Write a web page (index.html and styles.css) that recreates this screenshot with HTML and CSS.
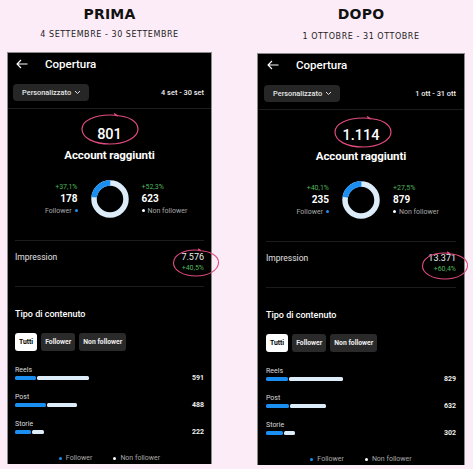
FILE: index.html
```html
<!DOCTYPE html>
<html lang="it">
<head>
<meta charset="utf-8">
<title>Prima / Dopo</title>
<link rel="stylesheet" href="styles.css">
</head>
<body>
<div class="cols">
  <section class="col col--before">
    <h1 class="title">PRIMA</h1>
    <p class="sub">4 SETTEMBRE - 30 SETTEMBRE</p>
    <div class="phone">
      <div class="hdr">
        <svg class="back" width="12" height="10" viewBox="0 0 12 10"><path d="M11.5 5H1M5 1L1 5l4 4" fill="none" stroke="#fff" stroke-width="1.1"/></svg>
        <span class="hdr-title">Copertura</span>
      </div>
      <div class="range">
        <span class="pill">Personalizzato <svg width="7" height="5" viewBox="0 0 7 5"><path d="M1 1l2.5 2.5L6 1" fill="none" stroke="#ddd" stroke-width="1"/></svg></span>
        <span class="dates">4 set - 30 set</span>
      </div>
      <div class="sep sep--full"></div>
      <div class="reach">801</div>
      <div class="reach-label">Account raggiunti</div>
      <div class="donut-row">
        <div class="stat stat--left">
          <span class="pct">+37,1%</span>
          <span class="num">178</span>
          <span class="lbl">Follower <i class="dot dot--blue"></i></span>
        </div>
        <svg class="donut" width="38" height="38" viewBox="0 0 38 38">
          <circle cx="19" cy="19" r="16" fill="none" stroke="#dcecf9" stroke-width="5.5"/>
          <circle cx="19" cy="19" r="16" fill="none" stroke="#1b8ef2" stroke-width="5.5" stroke-dasharray="23.5 100" transform="rotate(-174 19 19)"/>
        </svg>
        <div class="stat stat--right">
          <span class="pct">+52,3%</span>
          <span class="num">623</span>
          <span class="lbl"><i class="dot dot--white"></i> Non follower</span>
        </div>
      </div>
      <div class="sep sep--a"></div>
      <div class="imp">
        <span class="imp-label">Impression</span>
        <div class="imp-val"><span class="imp-num">7.576</span><span class="pct">+40,5%</span></div>
      </div>
      <div class="sep sep--b"></div>
      <div class="ctitle">Tipo di contenuto</div>
      <div class="tabs">
        <span class="tab tab--on">Tutti</span>
        <span class="tab">Follower</span>
        <span class="tab">Non follower</span>
      </div>
      <div class="bars">
        <div class="bar-item">
          <span class="bar-label">Reels</span>
          <div class="bar-row"><div class="bar"><i class="b-blue" style="width:21px"></i><i class="b-light" style="width:52px"></i></div><span class="bar-num">591</span></div>
        </div>
        <div class="bar-item">
          <span class="bar-label">Post</span>
          <div class="bar-row"><div class="bar"><i class="b-blue" style="width:31px"></i><i class="b-light" style="width:30px"></i></div><span class="bar-num">488</span></div>
        </div>
        <div class="bar-item">
          <span class="bar-label">Storie</span>
          <div class="bar-row"><div class="bar"><i class="b-blue" style="width:16px"></i><i class="b-light" style="width:12px"></i></div><span class="bar-num">222</span></div>
        </div>
      </div>
      <div class="legend">
        <span><i class="dot dot--blue"></i> Follower</span>
        <span><i class="dot dot--white"></i> Non follower</span>
      </div>
      <svg class="circ circ--reach" width="60" height="34" viewBox="0 0 60 34"><path d="M36 3.5C48 4 58 9 58 17c0 8-12 15-28 15C14 32 2 26 2 17 2 9 14 3 30 3c3 0 6 .3 8 1l-4-2.5" fill="none" stroke="#e24a80" stroke-width="1.2"/></svg>
      <svg class="circ circ--imp" width="48" height="30" viewBox="0 0 48 30"><path d="M27 2.5C38 3 47 8 46.5 15c-.5 7-9.5 13-22.5 13C11 28 1.5 22 1.5 15 1.5 8 10 2 23 2c2 0 4 .2 6 .6l-3-1.8" fill="none" stroke="#e24a80" stroke-width="1.1"/></svg>
    </div>
  </section>

  <section class="col col--after">
    <h1 class="title">DOPO</h1>
    <p class="sub sub--after">1 OTTOBRE - 31 OTTOBRE</p>
    <div class="phone">
      <div class="hdr">
        <svg class="back" width="12" height="10" viewBox="0 0 12 10"><path d="M11.5 5H1M5 1L1 5l4 4" fill="none" stroke="#fff" stroke-width="1.1"/></svg>
        <span class="hdr-title">Copertura</span>
      </div>
      <div class="range">
        <span class="pill">Personalizzato <svg width="7" height="5" viewBox="0 0 7 5"><path d="M1 1l2.5 2.5L6 1" fill="none" stroke="#ddd" stroke-width="1"/></svg></span>
        <span class="dates">1 ott - 31 ott</span>
      </div>
      <div class="sep sep--full"></div>
      <div class="reach">1.114</div>
      <div class="reach-label">Account raggiunti</div>
      <div class="donut-row">
        <div class="stat stat--left">
          <span class="pct">+40,1%</span>
          <span class="num">235</span>
          <span class="lbl">Follower <i class="dot dot--blue"></i></span>
        </div>
        <svg class="donut" width="38" height="38" viewBox="0 0 38 38">
          <circle cx="19" cy="19" r="16" fill="none" stroke="#dcecf9" stroke-width="5.5"/>
          <circle cx="19" cy="19" r="16" fill="none" stroke="#1b8ef2" stroke-width="5.5" stroke-dasharray="22.5 100" transform="rotate(-170 19 19)"/>
        </svg>
        <div class="stat stat--right">
          <span class="pct">+27,5%</span>
          <span class="num">879</span>
          <span class="lbl"><i class="dot dot--white"></i> Non follower</span>
        </div>
      </div>
      <div class="sep sep--a"></div>
      <div class="imp">
        <span class="imp-label">Impression</span>
        <div class="imp-val"><span class="imp-num">13.371</span><span class="pct">+60,4%</span></div>
      </div>
      <div class="sep sep--b"></div>
      <div class="ctitle">Tipo di contenuto</div>
      <div class="tabs">
        <span class="tab tab--on">Tutti</span>
        <span class="tab">Follower</span>
        <span class="tab">Non follower</span>
      </div>
      <div class="bars">
        <div class="bar-item">
          <span class="bar-label">Reels</span>
          <div class="bar-row"><div class="bar"><i class="b-blue" style="width:22px"></i><i class="b-light" style="width:54px"></i></div><span class="bar-num">829</span></div>
        </div>
        <div class="bar-item">
          <span class="bar-label">Post</span>
          <div class="bar-row"><div class="bar"><i class="b-blue" style="width:23px"></i><i class="b-light" style="width:36px"></i></div><span class="bar-num">632</span></div>
        </div>
        <div class="bar-item">
          <span class="bar-label">Storie</span>
          <div class="bar-row"><div class="bar"><i class="b-blue" style="width:17px"></i><i class="b-light" style="width:11px"></i></div><span class="bar-num">302</span></div>
        </div>
      </div>
      <div class="legend">
        <span><i class="dot dot--blue"></i> Follower</span>
        <span><i class="dot dot--white"></i> Non follower</span>
      </div>
      <svg class="circ circ--reach" width="60" height="34" viewBox="0 0 60 34"><path d="M36 3.5C48 4 58 9 58 17c0 8-12 15-28 15C14 32 2 26 2 17 2 9 14 3 30 3c3 0 6 .3 8 1l-4-2.5" fill="none" stroke="#e24a80" stroke-width="1.2"/></svg>
      <svg class="circ circ--imp" width="48" height="30" viewBox="0 0 48 30"><path d="M27 2.5C38 3 47 8 46.5 15c-.5 7-9.5 13-22.5 13C11 28 1.5 22 1.5 15 1.5 8 10 2 23 2c2 0 4 .2 6 .6l-3-1.8" fill="none" stroke="#e24a80" stroke-width="1.1"/></svg>
    </div>
  </section>
</div>
</body>
</html>
```
FILE: styles.css
```css
* { box-sizing: border-box; margin: 0; padding: 0; }
html, body { width: 473px; height: 469px; overflow: hidden; }
body { background: #fcecf7; font-family: Roboto, "Liberation Sans", sans-serif; color: #fff; }

.cols { display: flex; padding-left: 7px; gap: 45px; }
.col { display: flex; flex-direction: column; align-items: center; }
.col--before { width: 205px; }
.col--after { width: 208px; }

.title { font: 700 14px/16px "DejaVu Sans", sans-serif; color: #111; margin-top: 6px; letter-spacing: 0.2px; }
.sub { font: 400 8px/10px "DejaVu Sans", sans-serif; color: #222; margin-top: 8px; letter-spacing: 0.55px; }
.sub--after { margin-top: 10px; }

.phone {
  position: relative;
  width: 100%;
  height: 412px;
  margin-top: 12px;
  background: #000;
  border: 1px solid #8a8a8a;
  border-bottom: none;
  padding: 0 7px;
  display: flex;
  flex-direction: column;
}
.col--after .phone { margin-top: 11px; padding: 0 8px 0 8px; }

.hdr { height: 22px; display: flex; align-items: center; padding-left: 1px; }
.back { display: block; }
.hdr-title { font-size: 11.5px; font-weight: 500; margin-left: 17px; }

.range { margin-top: 9px; height: 17px; display: flex; align-items: center; justify-content: space-between; margin-left: -2px; }
.pill { height: 17px; background: #262626; border-radius: 4px; padding: 0 8px 0 9px; display: flex; align-items: center; gap: 3px; font-size: 7.4px; font-weight: 500; color: #e6e6e6; }
.dates { font-size: 7.4px; font-weight: 500; color: #f0f0f0; }

.sep { height: 1px; background: #1c1c1c; }
.sep--full { margin: 7px -7px 0; }
.sep--a { margin-top: 22px; }
.sep--b { margin-top: 13px; }

.reach { margin-top: 17px; text-align: center; font-size: 14.5px; line-height: 18px; font-weight: 500; }
.reach-label { margin-top: 4px; text-align: center; font-size: 11.5px; line-height: 15px; font-weight: 700; letter-spacing: -0.1px; }

.donut-row { margin-top: 17px; display: grid; grid-template-columns: 1fr auto 1fr; column-gap: 13px; align-items: center; }
.donut { display: block; }
.stat { display: flex; flex-direction: column; gap: 1px; }
.stat--left { align-items: flex-end; }
.stat--right { align-items: flex-start; }
.pct { font-size: 7px; line-height: 9px; color: #4fb45a; }
.num { font-size: 10px; line-height: 12px; font-weight: 700; }
.lbl { font-size: 7px; line-height: 10px; color: #a8a8a8; display: flex; align-items: center; gap: 3px; }
.dot { display: inline-block; width: 3px; height: 3px; border-radius: 50%; }
.dot--blue { background: #1b8ef2; }
.dot--white { background: #fff; }

.imp { margin-top: 11px; display: flex; justify-content: space-between; align-items: flex-start; }
.imp-label { font-size: 8.5px; line-height: 11px; color: #e0e0e0; }
.imp-val { display: flex; flex-direction: column; align-items: flex-end; }
.imp-num { font-size: 9px; line-height: 11px; color: #eee; }
.imp-val .pct { line-height: 10px; }

.ctitle { margin-top: 21px; font-size: 9px; line-height: 12px; font-weight: 500; }
.tabs { margin-top: 13px; display: flex; gap: 4px; }
.tab { height: 18px; padding: 0 4px; border-radius: 3px; background: #2a2a2a; font-size: 6.8px; font-weight: 700; display: flex; align-items: center; color: #eee; }
.tab--on { background: #fff; color: #000; }

.bars { margin-top: 14px; display: flex; flex-direction: column; gap: 12px; }
.bar-item { display: flex; flex-direction: column; gap: 1px; }
.bar-label { font-size: 7px; line-height: 10px; color: #ddd; }
.bar-row { display: flex; align-items: center; justify-content: space-between; height: 4px; }
.bar { display: flex; gap: 1px; height: 4px; }
.bar i { display: block; height: 4px; border-radius: 1.5px; }
.b-blue { background: #1b8ef2; }
.b-light { background: #dcecf9; }
.bar-num { font-size: 7px; font-weight: 700; color: #eee; }

.legend { margin-top: 19px; display: flex; justify-content: center; gap: 21px; font-size: 7px; line-height: 10px; color: #a8a8a8; }
.legend span { display: flex; align-items: center; gap: 4px; }

.circ { position: absolute; }
.circ--reach { left: 72px; top: 59px; }
.circ--imp { left: 164px; top: 195px; }
.col--after .circ--reach { left: 75px; top: 61px; }
.col--after .circ--imp { left: 163px; top: 197px; }
```
